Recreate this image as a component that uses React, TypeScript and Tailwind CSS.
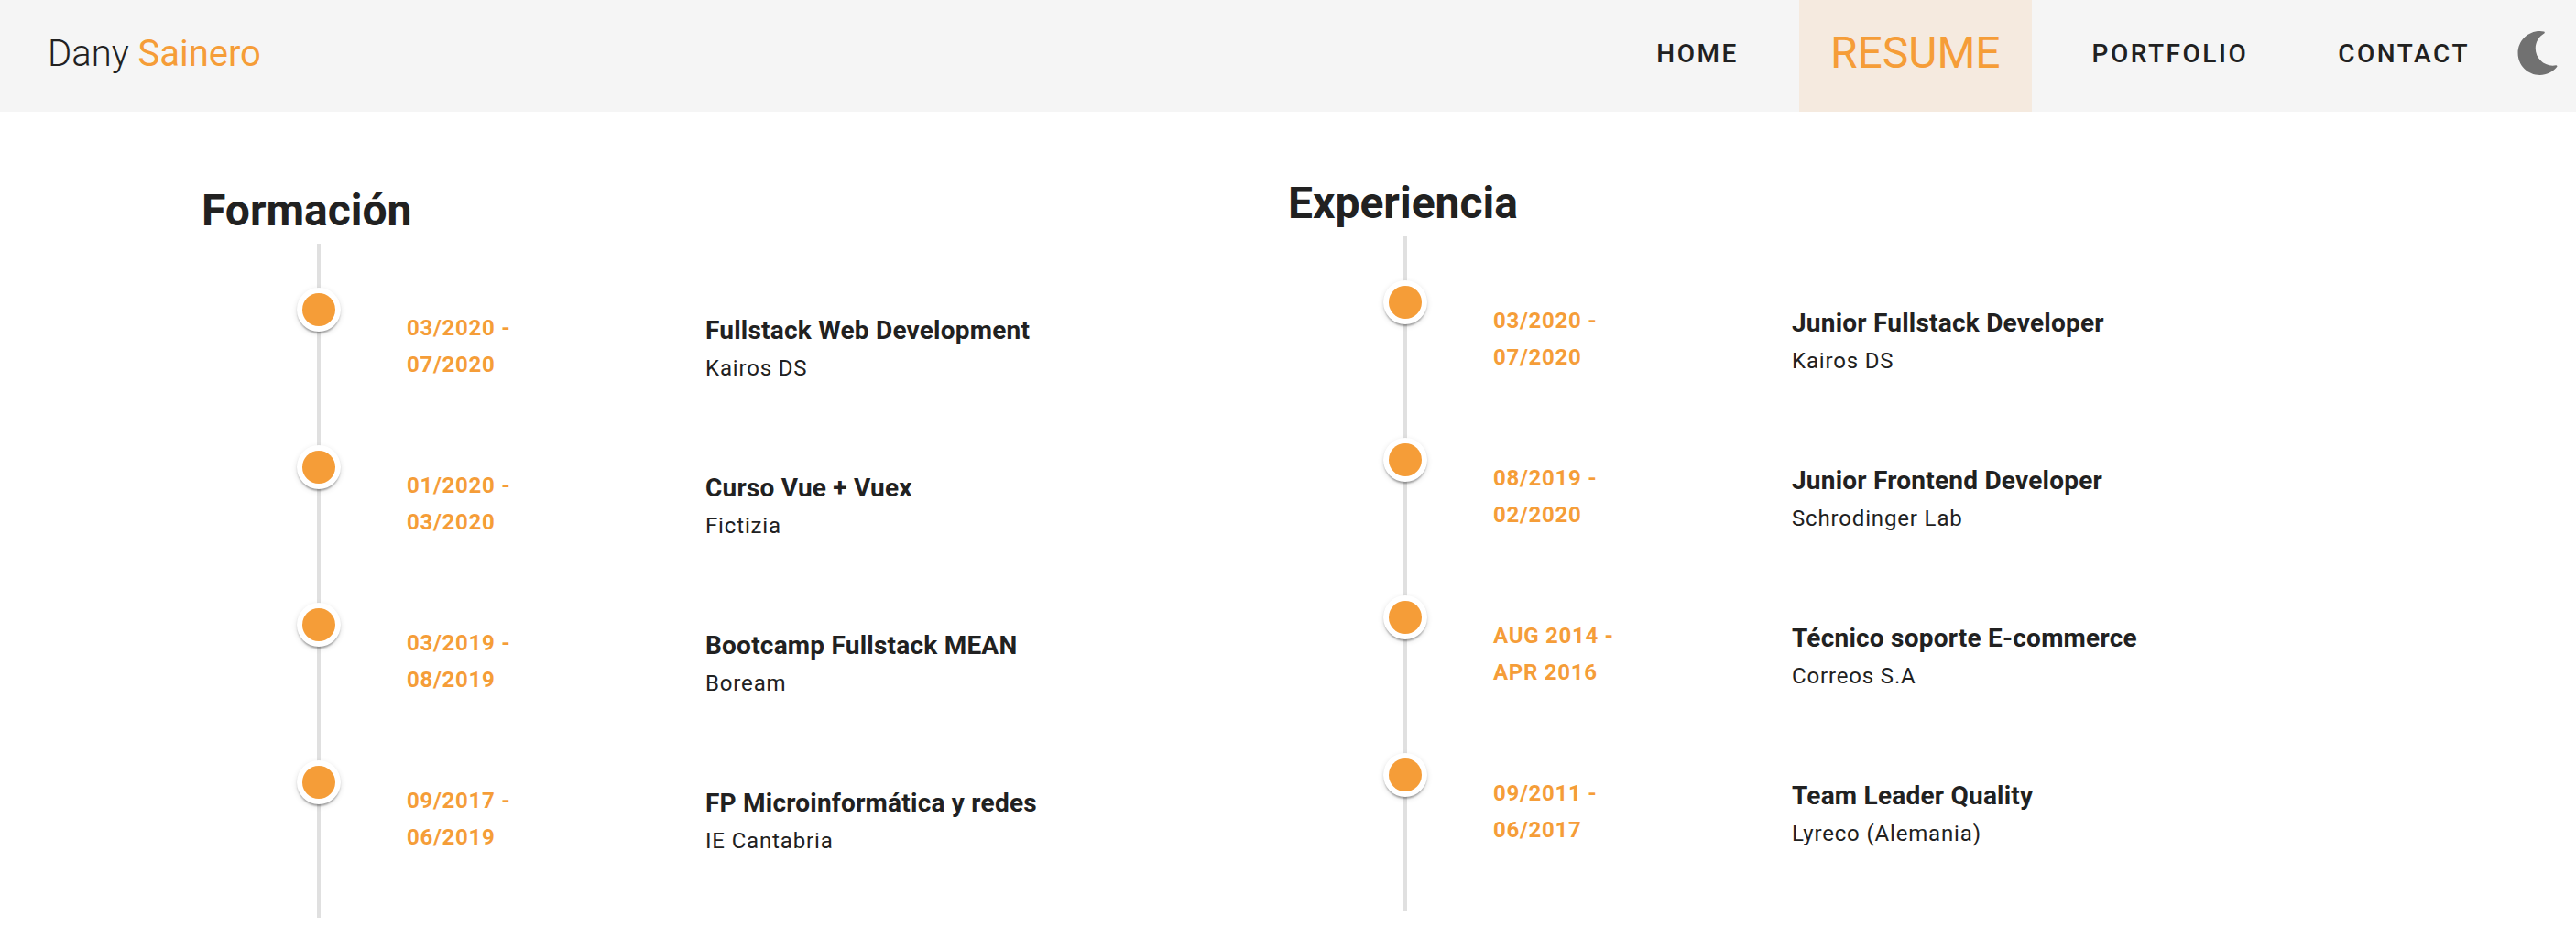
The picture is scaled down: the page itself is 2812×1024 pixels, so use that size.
import { FaMoon } from "react-icons/fa";

type Entry = { from: string; to: string; title: string; place: string };

const education: Entry[] = [
  { from: "03/2020", to: "07/2020", title: "Fullstack Web Development", place: "Kairos DS" },
  { from: "01/2020", to: "03/2020", title: "Curso Vue + Vuex", place: "Fictizia" },
  { from: "03/2019", to: "08/2019", title: "Bootcamp Fullstack MEAN", place: "Boream" },
  { from: "09/2017", to: "06/2019", title: "FP Microinformática y redes", place: "IE Cantabria" },
];

const experience: Entry[] = [
  { from: "03/2020", to: "07/2020", title: "Junior Fullstack Developer", place: "Kairos DS" },
  { from: "08/2019", to: "02/2020", title: "Junior Frontend Developer", place: "Schrodinger Lab" },
  { from: "AUG 2014", to: "APR 2016", title: "Técnico soporte E-commerce", place: "Correos S.A" },
  { from: "09/2011", to: "06/2017", title: "Team Leader Quality", place: "Lyreco (Alemania)" },
];

const links = ["Home", "Resume", "Portfolio", "Contact"];

function Header() {
  return (
    <header className="flex h-[122px] items-stretch justify-between bg-[#f5f5f5] pr-[18px] pl-[52px]">
      <a href="#home" className="flex items-center pb-1 text-[40px] font-light whitespace-pre">
        Dany <span className="font-normal text-[#f59d38]">Sainero</span>
      </a>
      <div className="flex items-stretch gap-[18px]">
        <nav className="flex items-stretch gap-[34px]">
          {links.map((link) => (
            <a
              key={link}
              href={`#${link.toLowerCase()}`}
              aria-current={link === "Resume" ? "page" : undefined}
              className={
                link === "Resume"
                  ? "flex items-center bg-[#f5eadf] px-[34px] pb-1.5 text-5xl uppercase text-[#f59d38]"
                  : "flex items-center px-8 pb-1 text-[28px] font-medium tracking-[0.09em] uppercase"
              }
            >
              {link}
            </a>
          ))}
        </nav>
        <button type="button" aria-label="Dark mode" className="flex items-center pb-1.5 text-[#717171]">
          <FaMoon className="size-12" />
        </button>
      </div>
    </header>
  );
}

function Timeline({ entries }: { entries: Entry[] }) {
  return (
    <ol className="relative ml-8 pt-12">
      <span aria-hidden="true" className="absolute inset-y-0 left-[94px] w-1 bg-[#e0e0e0]" />
      {entries.map((entry) => (
        <li key={entry.title} className="relative flex pb-[66px]">
          <div className="flex w-48 shrink-0 justify-center">
            <span className="flex size-12 items-center justify-center rounded-full bg-white shadow-[0_4px_2px_-2px_rgba(0,0,0,0.2),0_2px_2px_0_rgba(0,0,0,0.14),0_2px_6px_0_rgba(0,0,0,0.12)]">
              <span className="size-9 rounded-full bg-[#f59d38]" />
            </span>
          </div>
          <div className="grid flex-1 grid-cols-[326px_1fr] pt-6">
            <p className="text-2xl leading-10 font-bold tracking-[0.03em] text-[#f59d38]">
              {entry.from} -<br />
              {entry.to}
            </p>
            <div>
              <h3 className="text-[28px] leading-[46px] font-bold tracking-[0.008em]">{entry.title}</h3>
              <p className="text-2xl leading-9 tracking-[0.035em]">{entry.place}</p>
            </div>
          </div>
        </li>
      ))}
    </ol>
  );
}

export default function App() {
  return (
    <div className="min-h-screen bg-white font-[Roboto,sans-serif] text-[#212121]">
      <Header />
      <main className="mx-auto grid max-w-[2372px] grid-cols-2">
        <section className="pt-[72px]">
          <h2 className="text-5xl leading-[72px] font-bold">Formación</h2>
          <Timeline entries={education} />
        </section>
        <section className="pt-16">
          <h2 className="text-5xl leading-[72px] font-bold">Experiencia</h2>
          <Timeline entries={experience} />
        </section>
      </main>
    </div>
  );
}
